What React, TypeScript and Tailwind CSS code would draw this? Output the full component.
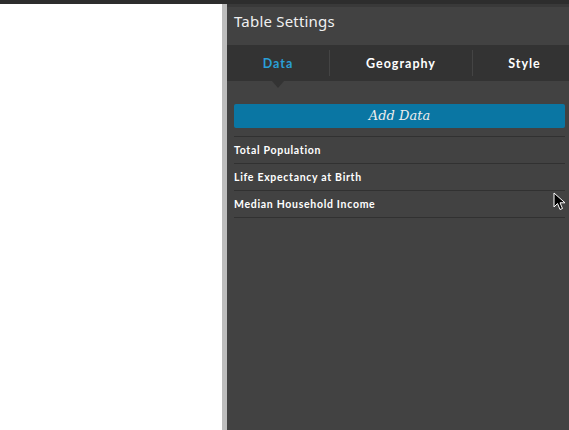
import React from "react";

export default function App() {
  const rows = ["Total Population", "Life Expectancy at Birth", "Median Household Income"];
  return (
    <div className="relative w-[569px] h-[430px] overflow-hidden bg-[#424242] flex flex-col" style={{ fontFamily: "Lato, 'Noto Sans', sans-serif" }}>
      <div className="h-[4px] bg-[#2d2d2d] shrink-0" />
      <div className="flex flex-1 min-h-0">
        <div className="w-[222px] bg-white shrink-0" />
        <div className="w-[5px] bg-[#bdbdbd] shrink-0" />
        <div className="flex-1 flex flex-col bg-[#424242]">
          <div className="h-[3px] bg-[#393939]" />
          <div className="h-[38px] flex items-center pl-[7px] pb-[9px] text-[15px] text-[#f0f0f0] tracking-[0.2px]" style={{ fontFamily: "'Noto Sans', Lato, sans-serif" }}>
            Table Settings
          </div>
          <div className="h-[36px] bg-[#333333] flex items-center text-[12.5px] font-bold tracking-[1px]">
            <div className="w-[102px] h-full flex items-center justify-center pt-[3px] text-[#2a9fd6] relative">
              Data
              <div className="absolute left-[45px] top-[36px] w-0 h-0 border-l-[6px] border-r-[6px] border-t-[7px] border-l-transparent border-r-transparent border-t-[#333333]" />
            </div>
            <div className="w-px h-[26px] bg-[#444444]" />
            <div className="w-[142px] h-full flex items-center justify-center pt-[3px] text-white">Geography</div>
            <div className="w-px h-[26px] bg-[#444444]" />
            <div className="flex-1 h-full flex items-center justify-center pt-[3px] pl-[7px] text-white">Style</div>
          </div>
          <div className="pl-[7px] pr-[4px] pt-[22px]">
            <div className="h-[24px] mt-[1px] bg-[#0a76a3] rounded-[2px] flex items-center justify-center italic text-[13px] text-[#eeeeee]" style={{ fontFamily: "'DejaVu Serif', 'Liberation Serif', serif" }}>
              Add Data
            </div>
            <div className="mt-[8px] border-t border-[#313131]" />
            {rows.map((r) => (
              <div key={r} className="h-[27px] pt-[2px] border-b border-[#313131] flex items-center text-[10.5px] font-bold tracking-[0.7px] text-white">
                {r}
              </div>
            ))}
          </div>
        </div>
      </div>
      <svg className="absolute left-[553px] top-[192px]" width="14" height="20" viewBox="0 0 14 20">
        <path d="M1 1 L1 15 L4.5 11.5 L7 17.5 L9.5 16.5 L7 10.8 L12 10.8 Z" fill="#000" stroke="#fff" strokeWidth="1" strokeLinejoin="round" />
      </svg>
    </div>
  );
}
